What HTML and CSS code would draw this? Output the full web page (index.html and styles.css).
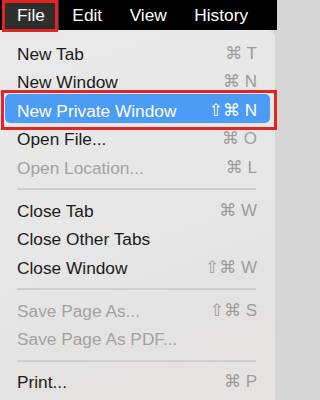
FILE: index.html
```html
<!DOCTYPE html>
<html>
<head>
<meta charset="utf-8">
<link rel="stylesheet" href="styles.css">
</head>
<body>
<div class="screen">
  <div class="menubar">
    <span class="mb-item mb-open">File</span>
    <span class="mb-item">Edit</span>
    <span class="mb-item">View</span>
    <span class="mb-item">History</span>
  </div>
  <div class="menu">
    <div class="item"><span>New Tab</span><span class="sc">⌘ T</span></div>
    <div class="item"><span>New Window</span><span class="sc">⌘ N</span></div>
    <div class="item active"><span>New Private Window</span><span class="sc">⇧⌘ N</span></div>
    <div class="item"><span>Open File...</span><span class="sc">⌘ O</span></div>
    <div class="item disabled"><span>Open Location...</span><span class="sc">⌘ L</span></div>
    <div class="sep"></div>
    <div class="item"><span>Close Tab</span><span class="sc">⌘ W</span></div>
    <div class="item"><span>Close Other Tabs</span></div>
    <div class="item"><span>Close Window</span><span class="sc">⇧⌘ W</span></div>
    <div class="sep"></div>
    <div class="item disabled"><span>Save Page As...</span><span class="sc">⇧⌘ S</span></div>
    <div class="item disabled"><span>Save Page As PDF...</span></div>
    <div class="sep"></div>
    <div class="item"><span>Print...</span><span class="sc">⌘ P</span></div>
  </div>
</div>
</body>
</html>
```
FILE: styles.css
```css
html, body {
  margin: 0;
  padding: 0;
}
body {
  width: 277px;
  height: 400px;
  overflow: hidden;
  background: #d6d6d6;
  font-family: "Liberation Sans", Arial, "DejaVu Sans", sans-serif;
  font-size: 17.3px;
}
.screen {
  width: 277px;
  height: 400px;
  display: flex;
  flex-direction: column;
}
.menubar {
  height: 30px;
  background: #000;
  display: flex;
  align-items: stretch;
  padding-left: 3px;
  position: relative;
  z-index: 2;
}
.mb-item {
  color: #fff;
  line-height: 30px;
  padding: 0 14px;
  margin-right: -0.5px;
}
.mb-open {
  background: #2e2e2e;
  position: relative;
}
.mb-open::after {
  content: "";
  position: absolute;
  left: -1px;
  right: 1px;
  top: 0;
  bottom: -2px;
  border: 3px solid #e32420;
}
.menu {
  flex: 1;
  padding-top: 9.7px;
  margin-right: 2px;
  border-top-right-radius: 8px;
  background: linear-gradient(160deg, #e9e9e9 0%, #e6e6e6 55%, #e4e1df 85%, #e8e3e0 100%);
}
.item {
  height: 28.5px;
  line-height: 28.5px;
  display: flex;
  justify-content: space-between;
  padding: 0 18px 0 17px;
  color: #1b1b1b;
  white-space: nowrap;
}
.sc {
  color: #9c9c9c;
  font-size: 17px;
}
.disabled {
  color: #a2a2a2;
}
.active {
  box-sizing: border-box;
  height: 29.5px;
  margin: -3.2px 5px 2.2px 5px;
  padding: 3.2px 13px 0 12px;
  background: #4c9bf5;
  border-radius: 5px;
  color: #fff;
  position: relative;
}
.active .sc {
  color: #fff;
}
.active::after {
  content: "";
  position: absolute;
  left: -4px;
  right: -7px;
  top: -3.5px;
  bottom: -6.5px;
  border: 3px solid #e32420;
}
.sep {
  height: 14.5px;
  display: flex;
  align-items: center;
  padding: 0 19px 0 17px;
}
.sep::before {
  content: "";
  flex: 1;
  height: 2px;
  background: #cecece;
}
```
